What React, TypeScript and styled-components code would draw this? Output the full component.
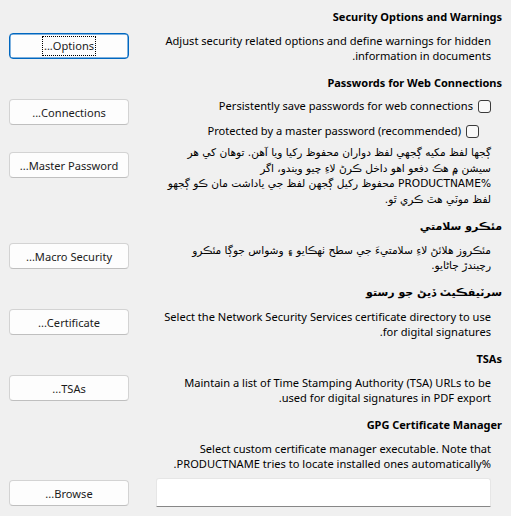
import React from "react";
import styled, { createGlobalStyle, css } from "styled-components";

const GlobalStyle = createGlobalStyle`
  html, body { margin: 0; padding: 0; background: #f0f0f0; }
  body {
    font-family: "Noto Sans", "DejaVu Sans", sans-serif;
    font-size: 11.1px;
    color: #000;
  }
`;

const latin = `"Noto Sans", "DejaVu Sans", sans-serif`;
const arabic = `"DejaVu Sans", "Noto Sans", sans-serif`;

const Page = styled.div`
  direction: rtl;
  width: 511px;
  height: 516px;
  box-sizing: border-box;
  padding: 9px 9px 0 9px;
  display: flex;
  flex-direction: column;
  gap: 12px;
  overflow: hidden;
`;

const Section = styled.section`
  display: flex;
  flex-direction: column;
  gap: 8px;
`;

const Heading = styled.h2<{ $arabic?: boolean }>`
  margin: 0;
  height: 16px;
  font-family: ${(p) => (p.$arabic ? arabic : latin)};
  font-size: 11px;
  font-weight: 700;
  line-height: 16px;
  text-align: right;
  white-space: nowrap;
`;

const Body = styled.div`
  display: grid;
  grid-template-columns: minmax(0, 1fr) 120px;
  column-gap: 26px;
  row-gap: 7px;
  align-items: start;
  padding-right: 11px;
`;

const Text = styled.div<{ $lh?: number; $arabic?: boolean }>`
  font-family: ${(p) => (p.$arabic ? arabic : latin)};
  font-size: ${(p) => (p.$arabic ? 10.6 : 11.1)}px;
  line-height: ${(p) => p.$lh ?? 15}px;
  text-align: right;
  white-space: nowrap;
`;

const Line = styled.div`
  height: inherit;
`;

const Button = styled.button<{ $focused?: boolean; $offset?: number }>`
  box-sizing: border-box;
  width: 120px;
  height: 26px;
  margin: ${(p) => p.$offset ?? 0}px 0 0 0;
  padding: 0;
  font-family: ${latin};
  font-size: 11.1px;
  color: #1b1b1b;
  background: #fdfdfd;
  border: 1px solid #d3d3d3;
  border-bottom-color: #bfbfbf;
  border-radius: 4px;
  display: flex;
  align-items: center;
  justify-content: center;
  ${(p) =>
    p.$focused &&
    css`
      border: 1px solid #0067c0;
      box-shadow: inset 0 0 0 0.5px #0067c0;
    `}
`;

const FocusLabel = styled.span`
  outline: 1px dotted #000;
  outline-offset: 0;
  padding: 1px 1px;
  line-height: 16px;
`;

const CheckList = styled.div`
  display: flex;
  flex-direction: column;
  gap: 11px;
`;

const CheckRow = styled.label<{ $indent?: number }>`
  display: flex;
  align-items: center;
  gap: 5px;
  height: 14px;
  line-height: 14px;
  margin-right: ${(p) => p.$indent ?? 0}px;
  white-space: nowrap;
`;

const Box = styled.span`
  flex: none;
  width: 13px;
  height: 13px;
  box-sizing: border-box;
  border: 1px solid #3b3b3b;
  border-radius: 3px;
  background: #f9f9f9;
`;

const Entry = styled.div`
  box-sizing: border-box;
  height: 29px;
  margin-left: 1px;
  background: #fff;
  border: 1px solid #e6e6e6;
  border-bottom: 1px solid #878787;
  border-radius: 3px 3px 0 0;
`;

const Spacer = styled.div``;

export default function App() {
  return (
    <>
      <GlobalStyle />
      <Page>
        <Section>
          <Heading>Security Options and Warnings</Heading>
          <Body>
            <Text>
              <Line>Adjust security related options and define warnings for hidden</Line>
              <Line>information in documents.</Line>
            </Text>
            <Button $focused>
              <FocusLabel>Options...</FocusLabel>
            </Button>
          </Body>
        </Section>

        <Section>
          <Heading>Passwords for Web Connections</Heading>
          <Body>
            <CheckList>
              <CheckRow>
                <Box />
                <span>Persistently save passwords for web connections</span>
              </CheckRow>
              <CheckRow $indent={12}>
                <Box />
                <span>Protected by a master password (recommended)</span>
              </CheckRow>
            </CheckList>
            <Button>Connections...</Button>
            <Text $arabic $lh={15.5}>
              <Line>ڳجها لفظ مکيه ڳجهي لفظ دواران محفوظ رکيا ويا آهن. توهان کي هر</Line>
              <Line>سيشن ۾ هڪ دفعو اهو داخل ڪرڻ لاءِ چيو ويندو، اگر</Line>
              <Line>%PRODUCTNAME محفوظ رکيل ڳجهن لفظ جي ياداشت مان ڪو ڳجهو</Line>
              <Line>لفظ موٽي هٿ ڪري ٿو.</Line>
            </Text>
            <Button $offset={7}>Master Password...</Button>
          </Body>
        </Section>

        <Section>
          <Heading $arabic>مئڪرو سلامتي</Heading>
          <Body>
            <Text $arabic>
              <Line>مئڪروز هلائڻ لاءِ سلامتيءَ جي سطح ٺهڪايو ۽ وشواس جوڳا مئڪرو</Line>
              <Line>رچيندڙ ڄاڻايو.</Line>
            </Text>
            <Button>Macro Security...</Button>
          </Body>
        </Section>

        <Section>
          <Heading $arabic>سرٽيفڪيٽ ڏيڻ جو رستو</Heading>
          <Body>
            <Text>
              <Line>Select the Network Security Services certificate directory to use</Line>
              <Line>for digital signatures.</Line>
            </Text>
            <Button>Certificate...</Button>
          </Body>
        </Section>

        <Section>
          <Heading>TSAs</Heading>
          <Body>
            <Text>
              <Line>Maintain a list of Time Stamping Authority (TSA) URLs to be</Line>
              <Line>used for digital signatures in PDF export.</Line>
            </Text>
            <Button>TSAs...</Button>
          </Body>
        </Section>

        <Section>
          <Heading>GPG Certificate Manager</Heading>
          <Body>
            <Text>
              <Line>Select custom certificate manager executable. Note that</Line>
              <Line>%PRODUCTNAME tries to locate installed ones automatically.</Line>
            </Text>
            <Spacer />
            <Entry />
            <Button $offset={2}>Browse...</Button>
          </Body>
        </Section>
      </Page>
    </>
  );
}
